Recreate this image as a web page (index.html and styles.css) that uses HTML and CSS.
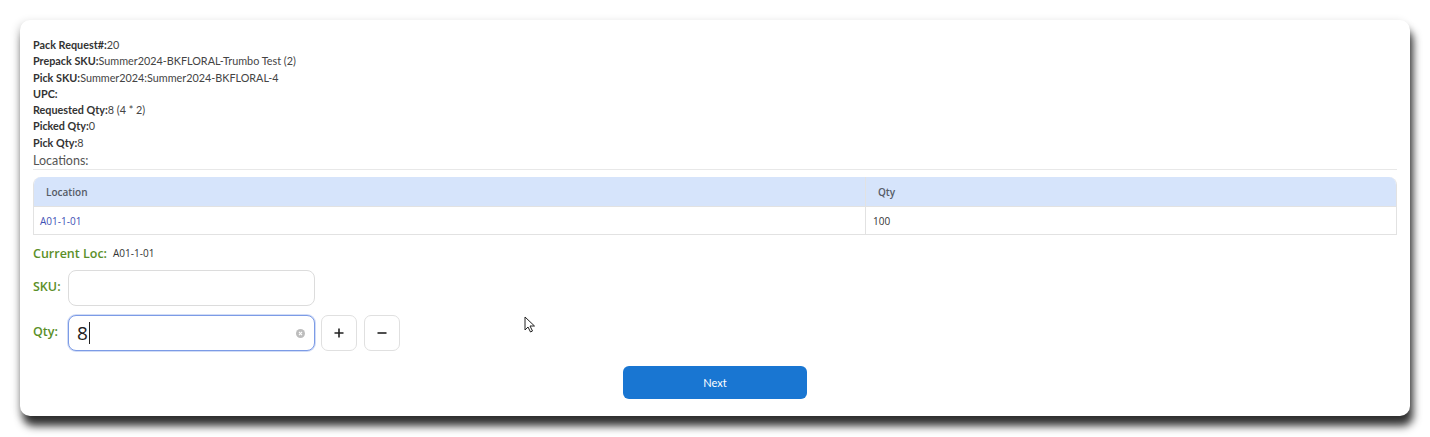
FILE: index.html
```html
<!DOCTYPE html>
<html>
<head>
<meta charset="utf-8">
<link rel="stylesheet" href="styles.css">
</head>
<body>
<div class="card">
  <div class="info">
    <div><b>Pack Request#:</b>20</div>
    <div><b>Prepack SKU:</b>Summer2024-BKFLORAL-Trumbo Test (2)</div>
    <div><b>Pick SKU:</b>Summer2024:Summer2024-BKFLORAL-4</div>
    <div><b>UPC:</b></div>
    <div><b>Requested Qty:</b>8 (4 * 2)</div>
    <div><b>Picked Qty:</b>0</div>
    <div><b>Pick Qty:</b>8</div>
  </div>
  <div class="loc-title">Locations:</div>
  <div class="table">
    <div class="thead">
      <div class="c1">Location</div>
      <div class="c2">Qty</div>
    </div>
    <div class="trow">
      <div class="c1 link">A01-1-01</div>
      <div class="c2">100</div>
    </div>
  </div>
  <div class="cur"><span class="glabel">Current Loc:</span><span class="curval">A01-1-01</span></div>
  <div class="frow">
    <span class="glabel flabel">SKU:</span>
    <div class="input"></div>
  </div>
  <div class="frow">
    <span class="glabel flabel">Qty:</span>
    <div class="input focus"><span class="val">8</span><span class="caret"></span>
      <svg class="clear" width="9" height="9" viewBox="0 0 10 10"><circle cx="5" cy="5" r="5" fill="#bdbdbd"/><path d="M3.3 3.3L6.7 6.7M6.7 3.3L3.3 6.7" stroke="#fff" stroke-width="1.2"/></svg>
    </div>
    <button class="sbtn"><svg width="12" height="12" viewBox="0 0 12 12"><path d="M6 1.5v9M1.5 6h9" stroke="#222" stroke-width="1.6"/></svg></button>
    <button class="sbtn"><svg width="12" height="12" viewBox="0 0 12 12"><path d="M1.5 6h9" stroke="#222" stroke-width="1.6"/></svg></button>
  </div>
  <div class="actions"><button class="next">Next</button></div>
  <svg class="cursor" width="12" height="17" viewBox="0 0 12 17"><path d="M1 1v13l3-3 2.5 5 2-1-2.5-5h4.5z" fill="#fff" stroke="#222" stroke-width="1"/></svg>
</div>
</body>
</html>
```
FILE: styles.css
```css
html, body {
  margin: 0;
  padding: 0;
  background: #fff;
}
body {
  font-family: "Lato", "Open Sans", sans-serif;
  color: #333;
  padding-bottom: 21px;
}
.card {
  position: relative;
  margin: 20px 0 0 20px;
  width: 1390px;
  height: 396px;
  box-sizing: border-box;
  padding: 17px 13px 17px 13px;
  background: #fff;
  border-radius: 10px;
  box-shadow: 3px 10px 8px rgba(0,0,0,0.8), -2px 2px 8px rgba(0,0,0,0.15);
}
.info {
  font-size: 10.8px;
  line-height: 16.3px;
  color: #444;
}
.info b {
  font-weight: 700;
  color: #333;
}
.loc-title {
  margin-top: 2px;
  font-size: 12.5px;
  line-height: 15px;
  color: #555;
  padding-bottom: 1px;
  border-bottom: 1px solid #e8e8e8;
}
.table {
  margin-top: 7px;
  border: 1px solid #e2e2e2;
  border-top: none;
  border-radius: 8px 8px 0 0;
  overflow: hidden;
  font-family: "Open Sans", sans-serif;
}
.thead, .trow {
  display: flex;
}
.thead {
  background: #d6e4fb;
  height: 29px;
  align-items: center;
  font-size: 10px;
  font-weight: 600;
  color: #555b66;
}
.trow {
  height: 27px;
  align-items: center;
  font-size: 10px;
  color: #333;
  border-top: 1px solid #e2e2e2;
}
.c1 {
  width: 832px;
  flex: none;
  box-sizing: border-box;
  height: 100%;
  display: flex;
  align-items: center;
  border-right: 1px solid #e2e2e2;
}
.thead .c1 { padding-left: 12px; }
.trow .c1 { padding-left: 6px; }
.c2 {
  padding-left: 7px;
}
.thead .c2 { padding-left: 12px; }
.link {
  color: #3f51b5;
}
.cur {
  margin-top: 8px;
  height: 20px;
  display: flex;
  align-items: center;
}
.glabel {
  color: #5b8f29;
  font-size: 12.5px;
  font-family: "Open Sans", sans-serif;
  font-weight: 600;
}
.curval {
  font-family: "Open Sans", sans-serif;
  font-size: 10px;
  color: #333;
  margin-left: 6px;
}
.frow {
  display: flex;
  align-items: center;
  margin-top: 7px;
}
.frow + .frow {
  margin-top: 9px;
}
.flabel {
  width: 35px;
  flex: none;
  margin-top: -4px;
}
.input {
  position: relative;
  width: 247px;
  height: 36px;
  box-sizing: border-box;
  border: 1px solid #dcdcdc;
  border-radius: 8px;
  background: #fff;
  display: flex;
  align-items: center;
  padding-left: 8px;
}
.input.focus {
  border-color: #7c9be6;
  box-shadow: 0 0 0 1px rgba(124,155,230,0.35);
}
.val {
  font-family: "Open Sans", sans-serif;
  font-size: 19px;
  color: #222;
}
.caret {
  width: 1px;
  height: 22px;
  background: #222;
  margin-left: 1px;
}
.clear {
  position: absolute;
  right: 9px;
  top: 13px;
}
.sbtn {
  width: 36px;
  height: 36px;
  margin-left: 6px;
  box-sizing: border-box;
  border: 1px solid #e0e0e0;
  border-radius: 7px;
  background: #fff;
  display: flex;
  align-items: center;
  justify-content: center;
  padding: 0;
}
.sbtn + .sbtn {
  margin-left: 7px;
}
.actions {
  display: flex;
  justify-content: center;
  margin-top: 15px;
}
.next {
  width: 184px;
  height: 33px;
  border: none;
  border-radius: 6px;
  background: #1976d2;
  color: #fff;
  font-family: "Lato", "Open Sans", sans-serif;
  font-size: 11px;
}
.cursor {
  position: absolute;
  left: 504px;
  top: 296px;
}
```
